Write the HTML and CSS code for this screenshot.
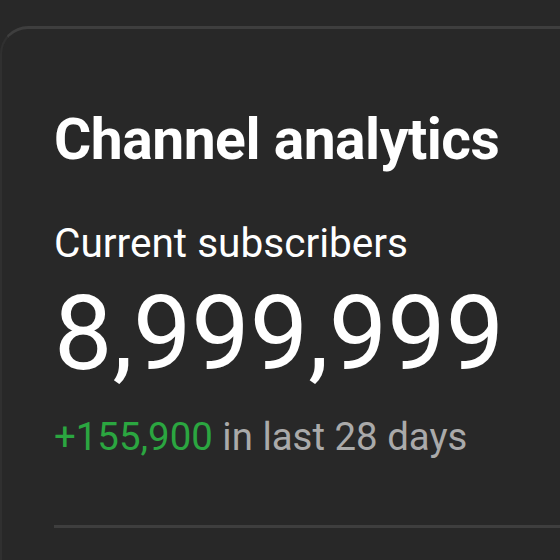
FILE: index.html
```html
<!DOCTYPE html>
<html lang="en">
<head>
    <meta charset="UTF-8">
    <meta name="viewport" content="width=device-width, initial-scale=1.0">
    <title>Channel analytics</title>
    <link rel="stylesheet" href="styles.css">
</head>
<body>
    <div class="card">
        <h2 class="card-title">Channel analytics</h2>
        <div class="subs-label">Current subscribers</div>
        <div class="subs-count">8,999,999</div>
        <div class="subs-change"><span class="up">+155,900</span> in last 28 days</div>
        <hr class="divider">
    </div>
</body>
</html>
```

FILE: styles.css
```css
body {
    font-family: Roboto, "Liberation Sans", sans-serif;
    margin: 0;
    padding: 0;
    background-color: #282828;
    color: #fff;
    overflow: hidden;
}
.card {
    margin-top: 26px;
    border-top: 3px solid #3e3e3e;
    border-left: 2px solid #303030;
    border-top-left-radius: 28px;
    padding: 71px 0 40px 52px;
}
.card-title {
    margin: 0;
    font-size: 57px;
    font-weight: 700;
    letter-spacing: -0.5px;
    line-height: 80px;
}
.subs-label {
    margin-top: 35px;
    font-size: 40.6px;
    line-height: 56px;
}
.subs-count {
    margin-top: 8px;
    font-size: 104px;
    line-height: 110px;
}
.subs-change {
    margin-top: 23px;
    font-size: 38.4px;
    line-height: 50px;
    color: #aaaaaa;
}
.subs-change .up {
    color: #2ba640;
}
.divider {
    margin: 63px 0 0 0;
    border: none;
    border-top: 3px solid #3e3e3e;
}
```
